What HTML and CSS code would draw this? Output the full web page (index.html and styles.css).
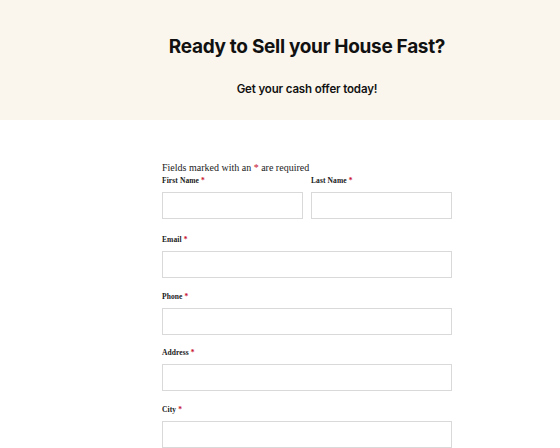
FILE: index.html
```html
<!DOCTYPE html>
<html lang="en">
<head>
<meta charset="utf-8">
<title>Sell your House Fast</title>
<link rel="stylesheet" href="styles.css">
</head>
<body>
<header class="hero">
  <div class="hero-inner">
    <h1 class="hero-title">Ready to Sell your House Fast?</h1>
    <p class="hero-sub">Get your cash offer today!</p>
  </div>
</header>
<main class="content">
  <form class="form">
    <p class="form-note">Fields marked with an <span class="req">*</span> are required</p>
    <div class="row-2">
      <div class="field">
        <label class="label">First Name <span class="req">*</span></label>
        <input class="input" type="text">
      </div>
      <div class="field">
        <label class="label">Last Name <span class="req">*</span></label>
        <input class="input" type="text">
      </div>
    </div>
    <div class="field">
      <label class="label">Email <span class="req">*</span></label>
      <input class="input" type="text">
    </div>
    <div class="field">
      <label class="label">Phone <span class="req">*</span></label>
      <input class="input" type="text">
    </div>
    <div class="field">
      <label class="label">Address <span class="req">*</span></label>
      <input class="input" type="text">
    </div>
    <div class="field">
      <label class="label">City <span class="req">*</span></label>
      <input class="input" type="text">
    </div>
  </form>
</main>
</body>
</html>
```

FILE: styles.css
```css
* { box-sizing: border-box; }
html, body { margin: 0; padding: 0; background: #ffffff; }
body { font-family: "Liberation Serif", serif; color: #1a1a1a; overflow: hidden; }

.hero {
  background: #faf6ee;
  height: 120px;
}
.hero-inner {
  width: 290px;
  margin-left: 162px;
  padding-top: 33px;
  text-align: center;
  font-family: Inter, "Noto Sans", sans-serif;
  color: #111111;
}
.hero-title {
  margin: 0;
  font-size: 19px;
  line-height: 28px;
  font-weight: 700;
  letter-spacing: -0.3px;
  white-space: nowrap;
}
.hero-sub {
  margin: 20px 0 0;
  font-size: 11.5px;
  line-height: 16px;
  font-weight: 600;
  letter-spacing: -0.15px;
}

.content {
  padding-top: 42px;
}
.form {
  width: 290px;
  margin-left: 162px;
  display: flex;
  flex-direction: column;
}
.form-note {
  margin: 0;
  font-size: 10px;
  line-height: 12px;
  color: #222222;
}
.req { color: #c8102e; }

.row-2 {
  display: grid;
  grid-template-columns: 1fr 1fr;
  gap: 8px;
  margin-top: 2px;
  margin-bottom: 16px;
}
.row-2 .field { margin-bottom: 0; }

.field {
  display: flex;
  flex-direction: column;
  margin-bottom: 13.67px;
}
.label {
  font-size: 7.5px;
  line-height: 10px;
  font-weight: 700;
  letter-spacing: 0.1px;
  color: #1a1a1a;
  margin-bottom: 6px;
}
.input {
  height: 27px;
  width: 100%;
  border: 1px solid #d9d9d9;
  background: #ffffff;
  margin: 0;
  padding: 0 6px;
  font: inherit;
}
```
